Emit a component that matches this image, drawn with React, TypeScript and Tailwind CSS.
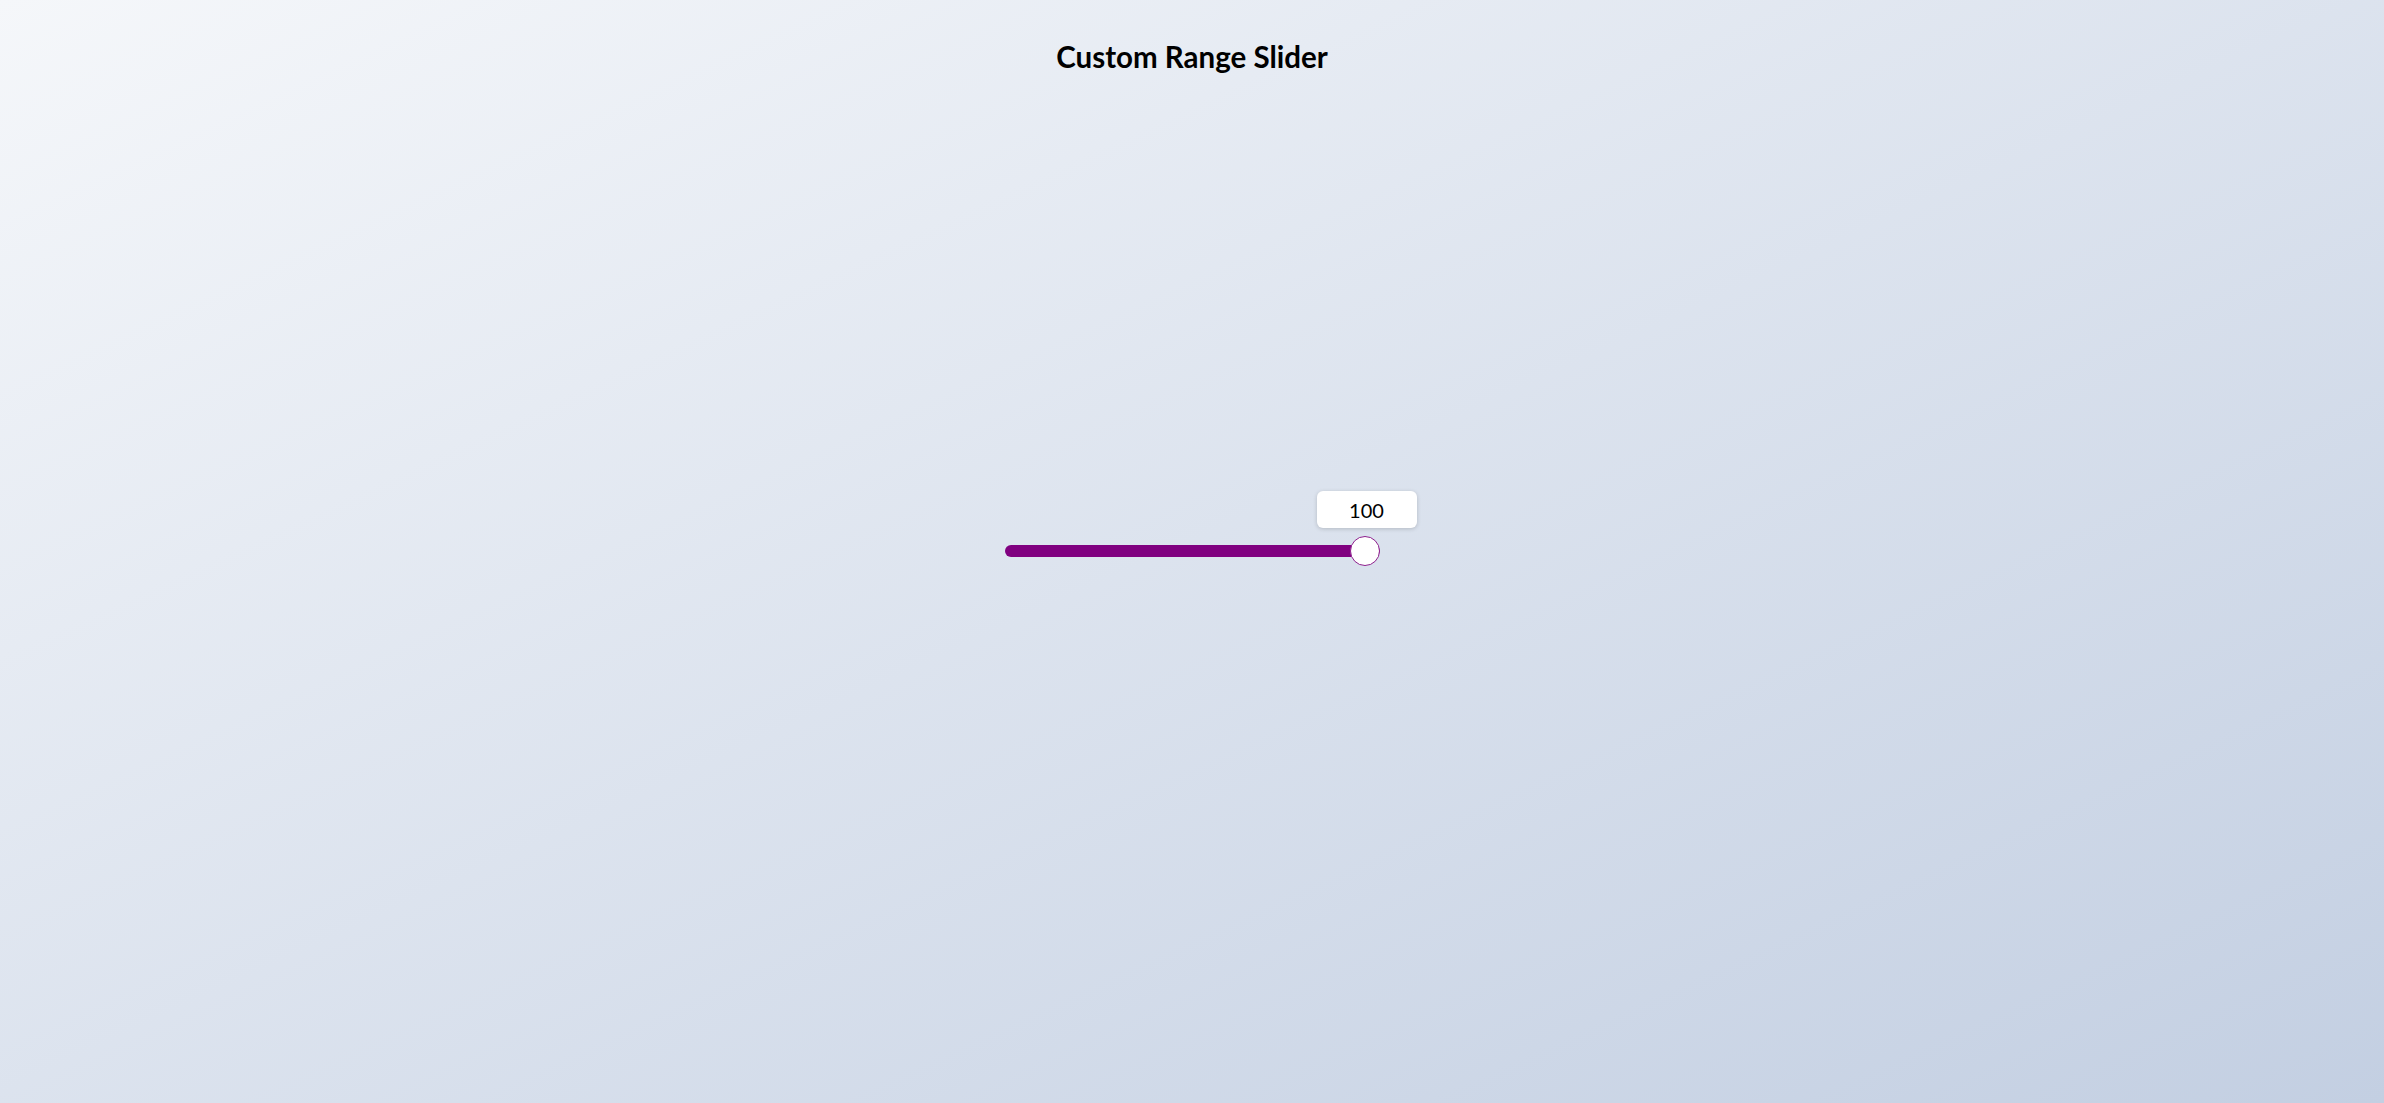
import React from 'react';

export default function App() {
  const value = 100;

  return (
    <div className="h-screen w-full flex flex-col bg-gradient-to-br from-[#f5f7fa] to-[#c3cfe2] font-['Lato',sans-serif] text-black">
      <header className="h-[75px] pt-[39px] shrink-0">
        <h1 className="text-[29.5px] leading-[1.2] font-bold text-center">Custom Range Slider</h1>
      </header>

      <main className="flex-1 flex items-center justify-center">
        {/* slider */}
        <div className="relative w-[375px] h-[30px] -mt-[1px] flex items-center">
          <div className="h-3 w-full rounded-full bg-[#800080]" />
          <div className="absolute right-0 top-0 w-[30px] h-[30px] rounded-full bg-white border border-[#8d1f8d]" />
          <div className="absolute left-[312px] bottom-[calc(100%+8px)] w-[100px] h-[37px] rounded-[6px] bg-white shadow-[0_1px_4px_rgba(0,0,0,0.18)] flex items-center justify-center text-[20px]">
            {value}
          </div>
        </div>
      </main>

      <div className="h-[75px] shrink-0" />
    </div>
  );
}
